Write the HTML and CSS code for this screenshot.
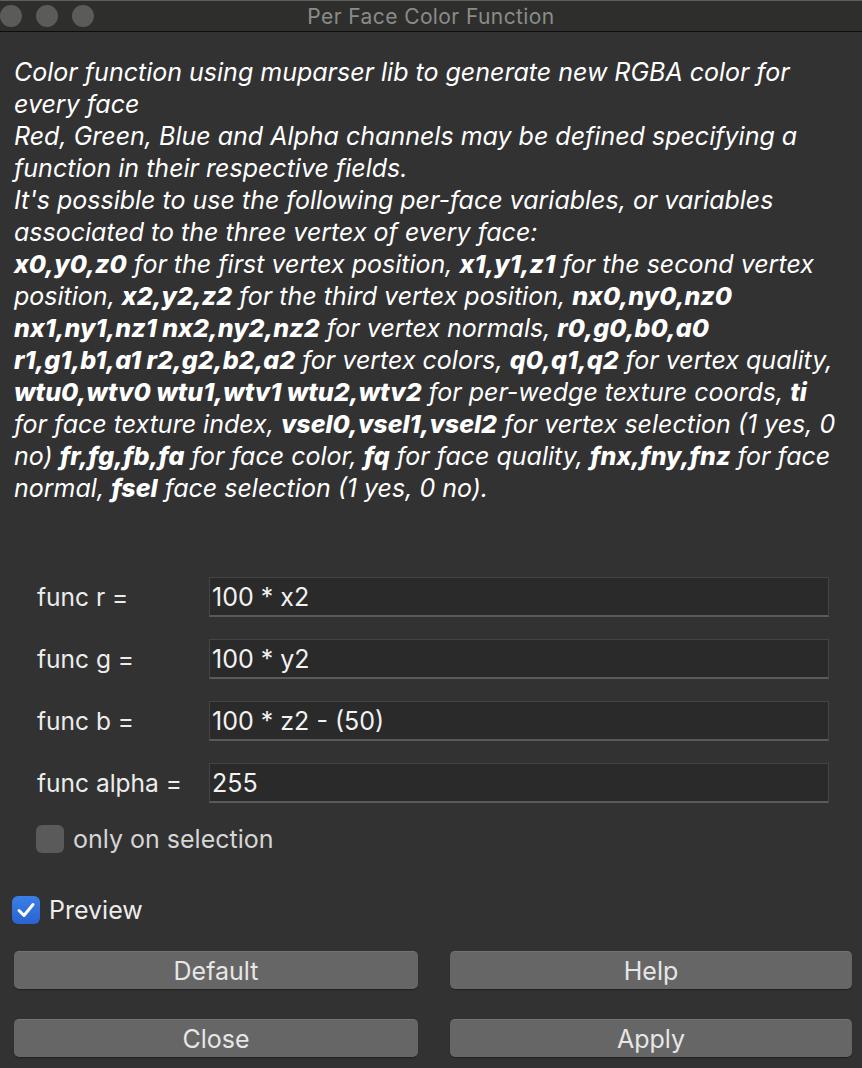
FILE: index.html
```html
<!DOCTYPE html>
<html>
<head>
<meta charset="utf-8">
<link rel="stylesheet" href="styles.css">
</head>
<body>
<div class="window">
  <div class="titlebar">
    <div class="lights">
      <span class="light"></span><span class="light"></span><span class="light"></span>
    </div>
    <div class="title">Per Face Color Function</div>
  </div>
  <div class="content">
    <div class="desc">
      <div class="ln">Color function using muparser lib to generate new RGBA color for</div>
      <div class="ln">every face</div>
      <div class="ln">Red, Green, Blue and Alpha channels may be defined specifying a</div>
      <div class="ln">function in their respective fields.</div>
      <div class="ln">It's possible to use the following per-face variables, or variables</div>
      <div class="ln">associated to the three vertex of every face:</div>
      <div class="ln"><b>x0,y0,z0</b> for the first vertex position, <b>x1,y1,z1</b> for the second vertex</div>
      <div class="ln">position, <b>x2,y2,z2</b> for the third vertex position, <b>nx0,ny0,nz0</b></div>
      <div class="ln"><b>nx1,ny1,nz1 nx2,ny2,nz2</b> for vertex normals, <b>r0,g0,b0,a0</b></div>
      <div class="ln"><b>r1,g1,b1,a1 r2,g2,b2,a2</b> for vertex colors, <b>q0,q1,q2</b> for vertex quality,</div>
      <div class="ln"><b>wtu0,wtv0 wtu1,wtv1 wtu2,wtv2</b> for per-wedge texture coords, <b>ti</b></div>
      <div class="ln">for face texture index, <b>vsel0,vsel1,vsel2</b> for vertex selection (1 yes, 0</div>
      <div class="ln">no) <b>fr,fg,fb,fa</b> for face color, <b>fq</b> for face quality, <b>fnx,fny,fnz</b> for face</div>
      <div class="ln">normal, <b>fsel</b> face selection (1 yes, 0 no).</div>
    </div>

    <div class="form">
      <label class="lbl">func r =</label><div class="field">100 * x2</div>
      <label class="lbl">func g =</label><div class="field">100 * y2</div>
      <label class="lbl">func b =</label><div class="field">100 * z2 - (50)</div>
      <label class="lbl">func alpha =</label><div class="field">255</div>
    </div>

    <div class="check-row sel">
      <span class="box"></span><span class="check-text dim">only on selection</span>
    </div>

    <div class="check-row preview">
      <span class="box on">
        <svg viewBox="0 0 28 28" width="28" height="28"><path d="M7 14.5 L12 19.5 L21 8.5" fill="none" stroke="#fff" stroke-width="3" stroke-linecap="round" stroke-linejoin="round"/></svg>
      </span><span class="check-text">Preview</span>
    </div>

    <div class="buttons">
      <div class="btn">Default</div>
      <div class="btn">Help</div>
      <div class="btn">Close</div>
      <div class="btn">Apply</div>
    </div>
  </div>
</div>
</body>
</html>
```
FILE: styles.css
```css
html, body {
  margin: 0;
  padding: 0;
  background: #323232;
}
.window {
  width: 862px;
  height: 1068px;
  background: #323232;
  overflow: hidden;
  font-family: Inter, "Liberation Sans", sans-serif;
  color: #ececec;
}
.titlebar {
  background: #2e2f2c;
  border-top: 1px solid #5e5f5c;
  border-bottom: 1px solid #0e0e0e;
  box-sizing: border-box;
  height: 32px;
  position: relative;
  display: flex;
  align-items: center;
  justify-content: center;
}
.lights {
  position: absolute;
  left: 0;
  top: 4px;
  display: flex;
  gap: 14px;
}
.light {
  width: 22px;
  height: 22px;
  border-radius: 50%;
  background: #5b5c59;
}
.title {
  font-size: 21px;
  color: #8b8c89;
  letter-spacing: 0.4px;
}
.content {
  padding: 24px 10px 0 14px;
}
.desc {
  font-style: italic;
  font-size: 25px;
  line-height: 32px;
  color: #ffffff;
  white-space: nowrap;
}
.desc b {
  font-weight: 800;
}
.form {
  margin-top: 73px;
  display: grid;
  grid-template-columns: 172px 620px;
  row-gap: 22px;
  padding-left: 23px;
  align-items: center;
}
.lbl {
  font-size: 24.5px;
  color: #ececec;
}
.field {
  height: 40px;
  box-sizing: border-box;
  background: #2a2a2a;
  border: 1px solid #444;
  border-bottom: 2px solid #5a5a5a;
  font-size: 25px;
  color: #f2f2f2;
  padding-left: 2px;
  display: flex;
  align-items: center;
}
.check-row {
  display: flex;
  align-items: center;
  gap: 9px;
  height: 30px;
}
.check-row.sel {
  margin-top: 21px;
  padding-left: 22px;
}
.check-row.preview {
  margin-top: 41px;
  margin-left: -2px;
}
.box {
  width: 28px;
  height: 28px;
  border-radius: 6px;
  background: #5a5a5a;
  box-sizing: border-box;
  display: block;
}
.box.on {
  background: linear-gradient(#3b7fe6, #2a63d1);
}
.box svg {
  display: block;
}
.check-text {
  font-size: 25px;
  color: #ececec;
}
.check-text.dim {
  color: #d6d6d6;
}
.buttons {
  margin-top: 26px;
  display: grid;
  grid-template-columns: 404px 402px;
  column-gap: 32px;
  row-gap: 30px;
}
.btn {
  height: 38px;
  border-radius: 5px;
  background: #666666;
  border-top: 1px solid #747474;
  box-sizing: border-box;
  display: flex;
  align-items: center;
  justify-content: center;
  font-size: 25px;
  color: #e6e6e6;
  box-shadow: 0 1px 1px rgba(0,0,0,0.35);
}
```
